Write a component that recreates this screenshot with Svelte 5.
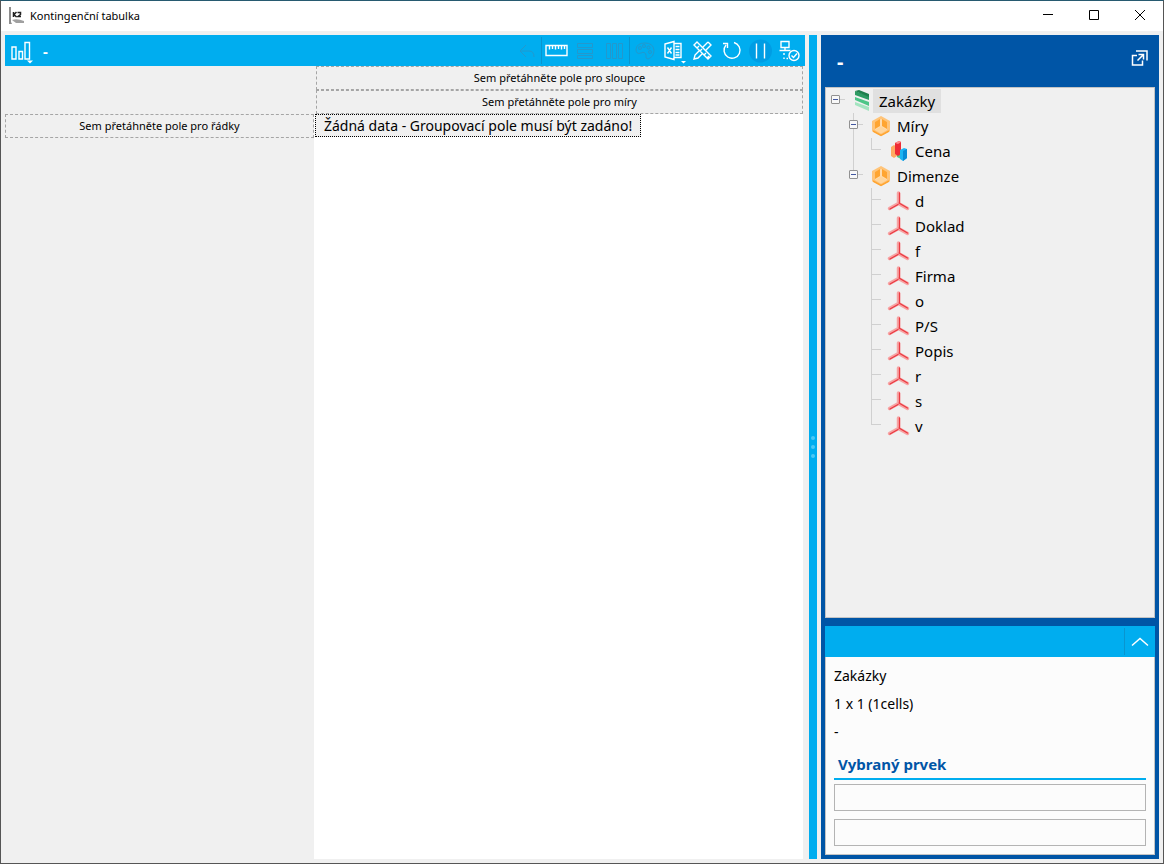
<script>
    const dimensions = ['d', 'Doklad', 'f', 'Firma', 'o', 'P/S', 'Popis', 'r', 's', 'v'];

    let tree = $state({
        label: 'Zakázky',
        icon: 'layers',
        open: true,
        children: [
            {
                label: 'Míry',
                icon: 'box',
                open: true,
                children: [{ label: 'Cena', icon: 'measure' }]
            },
            {
                label: 'Dimenze',
                icon: 'box',
                open: true,
                children: dimensions.map((label) => ({ label, icon: 'axis' }))
            }
        ]
    });

    let selected = $state('Zakázky');
    let first = $state('');
    let second = $state('');
</script>

{#snippet nodeIcon(name)}
    <svg class="node-icon" width="18" height="22" viewBox="0 0 18 22" aria-hidden="true">
        {#if name === 'layers'}
            <path d="M1 1l14 5v4L1 5z" fill="#2d9b62" />
            <path d="M1 1l4-1 10 4v3z" fill="#1f7f4d" />
            <path d="M1 7l14 5v4L1 10z" fill="#4cc587" />
            <path d="M1 12l14 5v4L1 15z" fill="#a3e4c0" />
        {:else if name === 'box'}
            <path d="M9 1l9 5v10l-9 5-9-5V6z" fill="#ffc479" />
            <path d="M9 4l6 3.300v7.400L9 18l-6-3.300V7.300z" fill="#ffdcae" />
            <path d="M3 7l5-3v7l-5 3zM15 7l-5-3v7l5 3z" fill="#ffa531" />
            <path d="M3 15L9 11.500l6 3.500L9 18.500z" fill="#ffd59c" />
            <path d="M1 16l8 4.500 8-4.500" fill="none" stroke="#ffa531" stroke-width="1.500" />
        {:else if name === 'measure'}
            <path d="M1 7l3-2 3 2v9l-3 2-3-2z" fill="#ffab61" />
            <path d="M7 12l4 2v5l-4-2z" fill="#52c78a" />
            <path d="M5 3l4-2 2 1v12l-3 2-3-2z" fill="#ee2b35" />
            <path d="M5 3l4-2 2 1-3 2z" fill="#ff8d8d" />
            <path d="M10 10l4-2 3 1v9l-4 3-3-2z" fill="#1cb4f2" />
            <path d="M13 11l4-2v9l-4 3z" fill="#078bd6" />
        {:else}
            <g fill="none" stroke-linecap="round">
                <path d="M8.500 3v10M8.500 13.500l-9 5M8.500 13.500l9 5" stroke="#f7a3a3" stroke-width="3.500" />
                <path d="M9.500 3v10M0 19l8-4.500M9 13l8.500 5" stroke="#ea3a42" stroke-width="1.300" />
            </g>
        {/if}
    </svg>
{/snippet}

{#snippet treeNode(node)}
    <li>
        <div class="row">
            <span class="branch">
                {#if node.children}
                    <button
                        class="expander"
                        aria-label="{node.open ? 'Sbalit' : 'Rozbalit'} {node.label}"
                        onclick={() => (node.open = !node.open)}
                    >
                        <svg width="9" height="9" viewBox="0 0 9 9">
                            <path d="M2 4.500h5" stroke="#4257a0" />
                            {#if !node.open}
                                <path d="M4.500 2v5" stroke="#4257a0" />
                            {/if}
                        </svg>
                    </button>
                {/if}
            </span>
            {@render nodeIcon(node.icon)}
            <button class="label" class:selected={selected === node.label} onclick={() => (selected = node.label)}>
                {node.label}
            </button>
        </div>
        {#if node.children && node.open}
            <ul>
                {#each node.children as child}
                    {@render treeNode(child)}
                {/each}
            </ul>
        {/if}
    </li>
{/snippet}

<div class="window">
    <header class="titlebar">
        <svg class="app-icon" width="18" height="18" viewBox="0 0 18 18">
            <path d="M0 0v17h3l-1-2V0z" fill="#8d8d8d" />
            <path d="M3 13q5-2 12 1v2H7z" fill="#a0a0a0" />
            <path d="M4.500 5v5M5 7.500L7.500 5M5 7.500L7.500 10M8.500 5.500h3v2l-2.500 2h3" fill="none" stroke="#222" stroke-width="1.500" />
        </svg>
        <h1>Kontingenční tabulka</h1>
        <button class="win-btn" aria-label="Minimalizovat">
            <svg width="10" height="10" viewBox="0 0 10 10"><path d="M0 4.500h10" stroke="#000" /></svg>
        </button>
        <button class="win-btn" aria-label="Maximalizovat">
            <svg width="10" height="10" viewBox="0 0 10 10"><path d="M.5.5h9v9h-9z" fill="none" stroke="#000" /></svg>
        </button>
        <button class="win-btn" aria-label="Zavřít">
            <svg width="10" height="10" viewBox="0 0 10 10"><path d="M0 0l10 10M10 0L0 10" stroke="#000" /></svg>
        </button>
    </header>

    <div class="content">
        <main class="pivot">
            <div class="toolbar">
                <button class="tool" aria-label="Graf">
                    <svg width="25" height="27" viewBox="0 0 25 27">
                        <path d="M2 10h4v12H2zM9 14.500h3.500V22H9zM15 5.500h4.500V22H15z" />
                        <path class="solid" d="M17 23.500h6l-3 3z" />
                    </svg>
                </button>
                <span class="toolbar-title">-</span>
                <button class="tool" disabled aria-label="Zpět">
                    <svg width="24" height="24" viewBox="0 0 24 24"><path d="M11 6l-6 6 6 6M5 12h9q5 0 5 6" /></svg>
                </button>
                <span class="sep"></span>
                <button class="tool" aria-label="Pravítko">
                    <svg width="24" height="24" viewBox="0 0 24 24">
                        <path d="M1 6.500h21v10H1zM4.500 7v3.500M7.500 7v3M10.500 7v3.500M13.500 7v3M16.500 7v3.500M19.500 7v3" />
                    </svg>
                </button>
                <button class="tool" disabled aria-label="Řádky">
                    <svg width="24" height="24" viewBox="0 0 24 24"><path d="M3.500 4.500h15v4h-15zM3.500 10.500h15v4h-15zM3.500 16.500h15v3h-15z" /></svg>
                </button>
                <button class="tool" disabled aria-label="Sloupce">
                    <svg width="24" height="24" viewBox="0 0 24 24"><path d="M3.500 4.500h4v15h-4zM9.500 4.500h4v15h-4zM15.500 4.500h4v15h-4z" /></svg>
                </button>
                <span class="sep"></span>
                <button class="tool" disabled aria-label="Barvy">
                    <svg width="24" height="24" viewBox="0 0 24 24">
                        <path d="M3 10q1-6 9-6 8 0 9 7 0 7-6 9-3 0-2-4-1-4-5-2-5 2-5-4z" />
                        <circle cx="7" cy="9" r="1.500" /><circle cx="11" cy="7" r="1.500" />
                        <circle cx="15.500" cy="8.500" r="1.500" /><circle cx="17" cy="13" r="1.500" />
                    </svg>
                </button>
                <button class="tool" aria-label="Export do Excelu">
                    <svg width="26" height="28" viewBox="0 0 26 28">
                        <path d="M4 7l9-2.500v18L4 20zM13 6.500h7v14h-7M6.500 10.500l4 6M10.500 10.500l-4 6M14.500 9.500h4M14.500 12.500h4M14.500 15.500h4M14.500 18h4" />
                        <path class="solid" d="M20 24h5l-2.500 2.500z" />
                    </svg>
                </button>
                <button class="tool" aria-label="Návrh">
                    <svg width="24" height="24" viewBox="0 0 24 24">
                        <path d="M3 6l3-3 14 14-3 3zM6 9l2-2M9 12l2-2M13 16l2-2M16 19l2-2M17 3l3 3-5 5M17 3l-5 5M8 12l-4 4-1 4 4-1 4-4" />
                    </svg>
                </button>
                <button class="tool" aria-label="Obnovit">
                    <svg width="24" height="24" viewBox="0 0 24 24"><path d="M14 3.500a8 8 0 1 1-8 2.500M3 4.500h4.500V9" /></svg>
                </button>
                <button class="tool" aria-label="Pozastavit">
                    <svg width="24" height="24" viewBox="0 0 24 24">
                        <circle class="disc" cx="11.500" cy="12" r="11.500" />
                        <path d="M7.500 4.500v15M15.500 4.500v15" />
                    </svg>
                </button>
                <button class="tool" aria-label="Automaticky">
                    <svg width="24" height="24" viewBox="0 0 24 24">
                        <path d="M3 2.500h8v6H3zM1.500 11.500h11M7 8.500v3" />
                        <path d="M6 14v2M6 18.500v1.500M8.500 19.500H10" />
                        <circle cx="16" cy="16.500" r="5" /><path d="M13.500 16.500l2 2 3.500-4" />
                    </svg>
                </button>
            </div>

            <div class="grid">
                <div class="rows-side">
                    <div class="drop">Sem přetáhněte pole pro řádky</div>
                </div>
                <div class="data-side">
                    <div class="column-zones">
                        <div class="drop">Sem přetáhněte pole pro sloupce</div>
                        <div class="drop">Sem přetáhněte pole pro míry</div>
                    </div>
                    <div class="message">Žádná data - Groupovací pole musí být zadáno!</div>
                </div>
            </div>
        </main>

        <div class="splitter"><i></i><i></i><i></i></div>

        <aside class="panel">
            <div class="panel-head">
                <h2>-</h2>
                <button aria-label="Otevřít v novém okně">
                    <svg width="18" height="18" viewBox="0 0 18 18">
                        <path d="M6 5.500H1.500V15h10v-4.500M5 1h11v9.500M6.500 10.500l6-6M7.500 4.500h5v5" fill="none" stroke="#fff" stroke-width="1.500" />
                    </svg>
                </button>
            </div>
            <nav class="tree">
                <ul>{@render treeNode(tree)}</ul>
            </nav>
            <div class="detail-bar">
                <button aria-label="Sbalit detail">
                    <svg width="18" height="10" viewBox="0 0 18 10"><path d="M1 8.500l8-7 8 7" fill="none" stroke="#fff" stroke-width="1.500" /></svg>
                </button>
            </div>
            <section class="detail">
                <p>Zakázky</p>
                <p>1 x 1 (1cells)</p>
                <p>-</p>
                <h3>Vybraný prvek</h3>
                <input type="text" aria-label="Název prvku" bind:value={first} />
                <input type="text" aria-label="Hodnota prvku" bind:value={second} />
            </section>
        </aside>
    </div>
</div>

<style>
    :global(body) {
        margin: 0;
        font-family: "Noto Sans", "Open Sans", sans-serif;
        font-size: 15px;
        color: #000;
    }

    button {
        display: flex;
        align-items: center;
        justify-content: center;
        padding: 0;
        border: 0;
        background: none;
        font: inherit;
        color: inherit;
    }

    svg {
        display: block;
        flex: none;
    }

    h1, h2, h3, p, ul {
        margin: 0;
        padding: 0;
    }

    .window {
        box-sizing: border-box;
        min-height: 100vh;
        display: flex;
        flex-direction: column;
        border: 1px solid #555;
        border-top-color: #275a70;
        background: #f0f0f0;
    }

    .titlebar {
        display: flex;
        height: 30px;
        align-items: center;
        padding-left: 8px;
        background: #fff;
    }

    .titlebar h1 {
        flex: 1;
        padding: 0 0 2px 3px;
        font-size: 11px;
        font-weight: 400;
    }

    .win-btn {
        width: 46px;
        height: 28px;
        align-self: flex-start;
    }

    .content {
        flex: 1;
        display: flex;
        gap: 4px;
        padding: 4px;
    }

    .pivot {
        flex: 1;
        display: flex;
        flex-direction: column;
        min-width: 0;
    }

    .toolbar {
        display: flex;
        height: 31px;
        align-items: center;
        padding: 0 1px 0 3px;
        background: #00adef;
        color: #fff;
    }

    .toolbar-title {
        flex: 1;
        padding-left: 6px;
        font-weight: 700;
    }

    .tool {
        width: 29px;
        height: 29px;
    }

    .tool path,
    .tool circle {
        fill: none;
        stroke: #fff;
        stroke-width: 1.4;
    }

    .tool .solid {
        fill: #fff;
        stroke: none;
    }

    .tool .disc {
        fill: #009de4;
        stroke: none;
    }

    .tool:disabled path,
    .tool:disabled circle {
        stroke: #2398cd;
        stroke-width: 1;
    }

    .sep {
        width: 1px;
        height: 27px;
        background: #0995cf;
    }

    .grid {
        flex: 1;
        display: grid;
        grid-template-columns: 309fr 491fr;
    }

    .rows-side {
        padding-top: 48px;
    }

    .data-side {
        margin-right: 2px;
        background: #fff;
    }

    .column-zones {
        padding-left: 2px;
        background: #f0f0f0;
    }

    .drop {
        box-sizing: border-box;
        height: 24px;
        border: 1px dashed #a5a5a5;
        font-size: 11px;
        line-height: 22px;
        text-align: center;
    }

    .message {
        box-sizing: border-box;
        width: max-content;
        height: 23px;
        margin-left: 1px;
        padding: 0 8px;
        border: 1px dotted #000;
        background: #f0f0f0;
        font-size: 14px;
        line-height: 22px;
    }

    .splitter {
        width: 8px;
        display: flex;
        flex-direction: column;
        align-items: center;
        justify-content: center;
        gap: 5px;
        background: #00adef;
    }

    .splitter i {
        width: 4px;
        height: 4px;
        border-radius: 2px;
        background: #4cc8f6;
    }

    .panel {
        box-sizing: border-box;
        width: 338px;
        display: flex;
        flex-direction: column;
        padding: 0 4px 4px;
        background: #0055a6;
    }

    .panel-head {
        display: flex;
        height: 52px;
        align-items: center;
        justify-content: space-between;
        padding: 0 6px 0 12px;
        box-sizing: border-box;
        color: #fff;
    }

    .panel-head button {
        padding-bottom: 4px;
    }

    .panel-head h2 {
        font-size: 20px;
    }

    .tree {
        flex: 1;
        border: 1px solid #c4c4c4;
        background: #f0f0f0;
    }

    .tree ul {
        list-style: none;
    }

    .tree li ul {
        padding-left: 18px;
    }

    .tree li li {
        background: linear-gradient(#d0d0d0, #d0d0d0) 9px 0 / 1px 100% no-repeat;
    }

    .tree li li:last-child {
        background-size: 1px 11px;
    }

    .row {
        display: flex;
        height: 25px;
        align-items: center;
        background: linear-gradient(#d0d0d0, #d0d0d0) 9px 11px / 10px 1px no-repeat;
    }

    .branch {
        width: 28px;
        height: 23px;
        padding-left: 5px;
        box-sizing: border-box;
        align-self: flex-start;
        display: flex;
        align-items: center;
    }

    .expander {
        box-sizing: border-box;
        width: 9px;
        height: 9px;
        border: 1px solid #919191;
        border-radius: 1px;
        background: #f8f8f8;
    }

    .node-icon {
        overflow: visible;
    }

    .label {
        height: 24px;
        padding: 0 6px;
        margin-left: 1px;
    }

    .label.selected {
        background: #e0e0e0;
    }

    .detail-bar {
        display: flex;
        justify-content: flex-end;
        align-items: center;
        height: 31px;
        margin-top: 8px;
        background: #00adef;
    }

    .detail-bar button {
        width: 31px;
        height: 27px;
        border-left: 1px solid #0995cf;
    }

    .detail {
        box-sizing: border-box;
        display: flex;
        flex-direction: column;
        padding: 5px 8px 8px;
        border: 1px solid #c4c4c4;
        border-top: 0;
        background: #fcfcfc;
    }

    .detail p {
        font-size: 14px;
        line-height: 28px;
    }

    .detail h3 {
        margin-top: 4px;
        padding: 0 4px;
        border-bottom: 2px solid #00adef;
        font-size: 15px;
        line-height: 28px;
        color: #0055a6;
    }

    .detail input {
        box-sizing: border-box;
        height: 27px;
        margin: 0;
        border: 1px solid #b4b4b4;
        background: #fcfcfc;
        font: inherit;
    }

    .detail h3 + input {
        margin: 4px 0 8px;
    }
</style>
